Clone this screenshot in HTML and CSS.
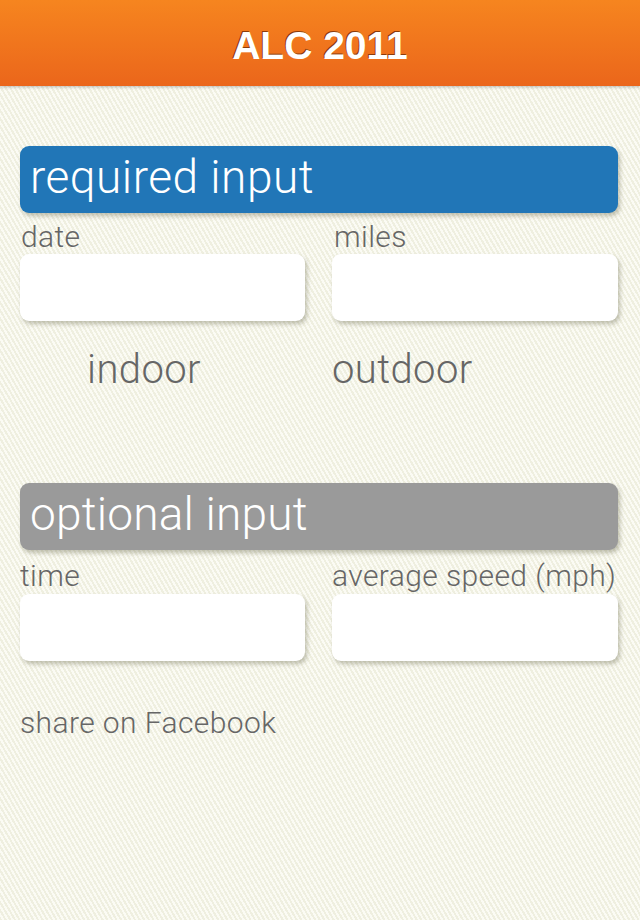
FILE: index.html
```html
<!DOCTYPE html>
<html lang="en">
<head>
<meta charset="utf-8">
<title>ALC 2011</title>
<link rel="stylesheet" href="styles.css">
</head>
<body>
<header class="topbar">
  <h1 class="title">ALC 2011</h1>
</header>
<main class="content">
  <section class="group">
    <div class="group-bar bar-blue">required input</div>
    <div class="fields">
      <div class="field">
        <label class="field-label label-first">date</label>
        <div class="field-box"></div>
      </div>
      <div class="field">
        <label class="field-label label-first-r">miles</label>
        <div class="field-box"></div>
      </div>
    </div>
    <div class="toggles">
      <span class="toggle toggle-left">indoor</span>
      <span class="toggle toggle-right">outdoor</span>
    </div>
  </section>
  <section class="group group-optional">
    <div class="group-bar bar-gray">optional input</div>
    <div class="fields fields-optional">
      <div class="field">
        <label class="field-label">time</label>
        <div class="field-box"></div>
      </div>
      <div class="field">
        <label class="field-label">average speed (mph)</label>
        <div class="field-box"></div>
      </div>
    </div>
  </section>
  <p class="share">share on Facebook</p>
</main>
</body>
</html>
```

FILE: styles.css
```css
html, body {
  margin: 0;
  padding: 0;
}
body {
  width: 640px;
  height: 920px;
  overflow: hidden;
  background-color: #f4f4e9;
  background-image: repeating-linear-gradient(60deg, #efefe0 0px, #efefe0 2px, #fbfbf4 2px, #fbfbf4 4px);
  font-family: Roboto, "Liberation Sans", Arial, sans-serif;
  font-weight: 300;
}
.topbar {
  height: 86px;
  display: flex;
  align-items: center;
  justify-content: center;
  background: linear-gradient(to bottom, #f6851f, #eb661b);
  box-shadow: 0 1px 3px rgba(0, 0, 0, 0.25);
  position: relative;
  z-index: 1;
}
.title {
  margin: 0;
  padding-top: 6px;
  font-family: "Liberation Sans", Arial, sans-serif;
  font-weight: bold;
  font-size: 39px;
  line-height: 40px;
  color: #ffffff;
  text-shadow: -1px -1px 0 #8b3c0c;
}
.content {
  padding: 60px 22px 0 20px;
}
.group-bar {
  height: 67px;
  border-radius: 9px;
  box-sizing: border-box;
  padding-left: 10px;
  padding-bottom: 5px;
  display: flex;
  align-items: center;
  font-size: 46px;
  letter-spacing: 0.5px;
  color: #ffffff;
  box-shadow: 2px 3px 4px rgba(90, 90, 60, 0.35);
}
.bar-blue {
  background: #2176b7;
}
.bar-gray {
  background: #9a9a9a;
  letter-spacing: 0.2px;
}
.fields {
  display: grid;
  grid-template-columns: 285px 286px;
  column-gap: 27px;
  margin-top: 9px;
}
.fields-optional {
  margin-top: 11px;
}
.field {
  display: flex;
  flex-direction: column;
}
.field-label {
  display: block;
  font-size: 30px;
  line-height: 29px;
  letter-spacing: 0.4px;
  color: #666666;
  margin-bottom: 3px;
}
.fields-optional .field-label {
  margin-bottom: 4px;
}
.label-first {
  padding-left: 1px;
}
.label-first-r {
  padding-left: 2px;
}
.field-box {
  height: 67px;
  background: #ffffff;
  border-radius: 9px;
  box-shadow: 2px 3px 4px rgba(90, 90, 60, 0.35);
}
.toggles {
  display: grid;
  grid-template-columns: 285px 286px;
  column-gap: 27px;
  margin-top: 29px;
  font-size: 40px;
  line-height: 40px;
  letter-spacing: 0.4px;
  color: #666666;
}
.toggle-left {
  padding-left: 67px;
}
.toggle-right {
  padding-left: 0;
}
.group-optional {
  margin-top: 93px;
}
.share {
  margin: 47px 0 0 0;
  font-size: 30px;
  line-height: 29px;
  letter-spacing: 0.4px;
  color: #666666;
}
```
